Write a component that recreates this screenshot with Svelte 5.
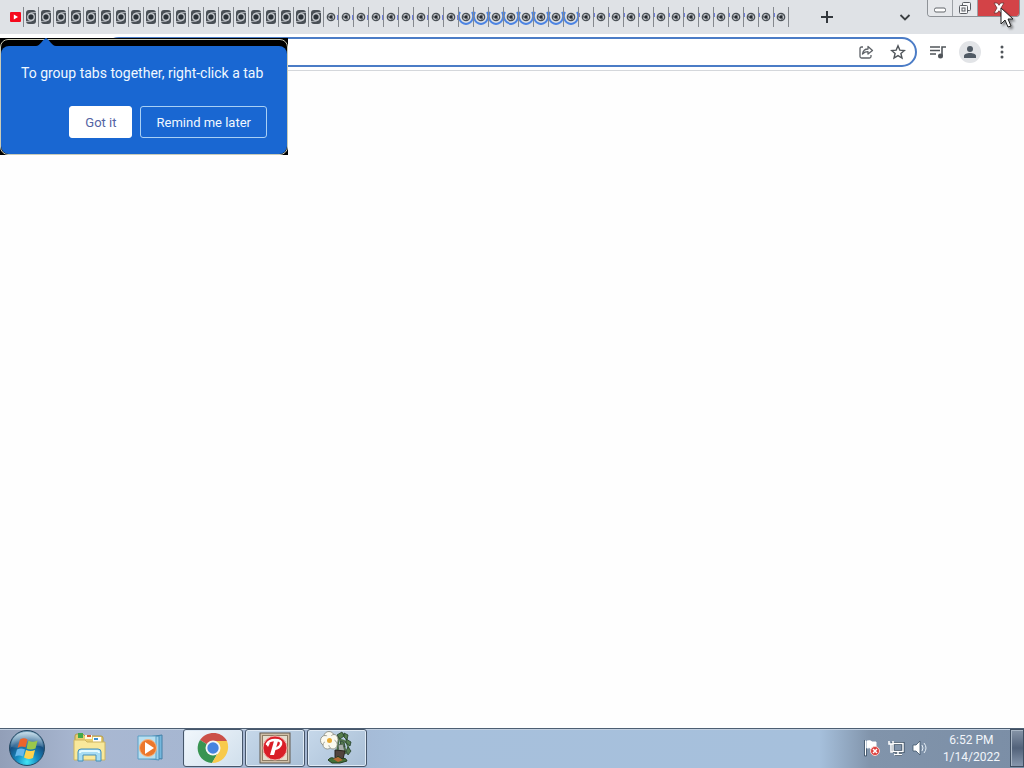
<script lang="ts">
  type Tab = { id: number; large: boolean; loading: boolean; hint: boolean };

  const tabs: Tab[] = Array.from({ length: 51 }, (_, i) => ({
    id: i,
    large: i < 20,
    loading: i >= 29 && i <= 36,
    hint: i >= 20,
  }));

  let address = $state("");
  let showPromo = $state(true);
</script>

<div class="screen">
  <header class="tabstrip">
    <div class="tabs">
      <button class="tab first" aria-label="YouTube">
        <svg width="11" height="10" viewBox="0 0 11 10">
          <rect width="11" height="10" rx="1" fill="#f5091c" />
          <path d="M3.8 2.5 8 5 3.8 7.5z" fill="#fff" />
        </svg>
      </button>
      {#each tabs as tab (tab.id)}
        <button class="tab" aria-label="New tab">
          {#if tab.large}
            <svg width="12" height="16" viewBox="0 0 12 16">
              <rect x="1" y="1" width="10" height="14" rx="3" fill="#4a5056" />
              <circle cx="6" cy="8" r="3.300" fill="none" stroke="#c9ccd0" stroke-width="1.200" />
              <path d="M3 5.500Q5 3 11 3.500M9 10.500Q7 13 1 12.500" fill="none" stroke="#c9ccd0" stroke-width=".8" />
              <circle cx="6" cy="8" r="2.200" fill="#2b3137" />
            </svg>
          {:else}
            <svg width="14" height="18" viewBox="0 0 14 18">
              {#if tab.loading}
                <path d="M1 4C-1.500 8 0 15 7 16 14 15 15.500 8 13 4" fill="none" stroke="#4c84e2" stroke-width="2" />
              {:else if tab.hint}
                <path d={tab.id < 29 ? "M13.500 7v5" : "M.5 5v4"} stroke="#6d7fe0" stroke-width="1" />
              {/if}
              <circle cx="7" cy="9" r="3.700" fill="#c9ccd0" stroke="#4a5056" stroke-width="1.300" />
              <path d="M7 7h3.500M5.300 10 3.600 7M8.700 10 7 13" stroke="#4a5056" stroke-width=".8" />
              <circle cx="7" cy="9" r="1.700" fill="#24292e" />
            </svg>
          {/if}
        </button>
      {/each}
    </div>
    <button class="new-tab" aria-label="Open new tab">
      <svg width="14" height="14" viewBox="0 0 14 14"><path d="M7 1v12M1 7h12" stroke="#33383d" stroke-width="2" /></svg>
    </button>
    <button class="tab-search" aria-label="Search tabs">
      <svg width="12" height="12" viewBox="0 0 12 12"><path d="m1.500 4 4.500 4.500L10.500 4" fill="none" stroke="#3c4043" stroke-width="1.800" /></svg>
    </button>
    <div class="window-buttons">
      <button aria-label="Minimize">
        <svg width="12" height="6" viewBox="0 0 12 6"><rect x=".5" y="1" width="11" height="4" rx="1.500" fill="#fff" stroke="#62666b" /></svg>
      </button>
      <button aria-label="Restore">
        <svg width="14" height="14" viewBox="0 0 14 14" stroke="#595d62" fill="#f8f9fa">
          <rect x="4.500" y="1.500" width="8" height="8" rx="1" />
          <rect x="1.500" y="4.500" width="8" height="8" rx="1" />
          <rect x="4" y="7" width="3" height="3" />
        </svg>
      </button>
      <button class="close" aria-label="Close">
        <svg width="12" height="12" viewBox="0 0 12 12">
          <path d="M1 1h3.300L6 3.300 7.700 1H11L8 6l3 5H7.700L6 8.700 4.300 11H1l3-5z" fill="#fff" stroke="#6c3434" stroke-width=".8" />
        </svg>
      </button>
    </div>
  </header>

  <div class="toolbar">
    <div class="omnibox">
      <input type="text" aria-label="Address and search bar" bind:value={address} />
      <button aria-label="Share this page">
        <svg width="16" height="16" viewBox="0 0 16 16" fill="none" stroke="#5f6368" stroke-width="1.300" stroke-linejoin="round">
          <path d="M5 3H3.500Q2 3 2 4.500v8Q2 14 3.500 14h8q1.500 0 1.500-1.500V11" />
          <path d="M4.500 10C5 6.500 7 5 10 5V2.500L14.500 6.500 10 10V7.700C7.500 7.700 6 8.500 4.500 10z" />
        </svg>
      </button>
      <button aria-label="Bookmark this tab">
        <svg width="16" height="16" viewBox="0 0 16 16"><path d="m8 1.800 1.800 4.300 4.600.4-3.500 3 1.100 4.500L8 11.600 4 14l1.100-4.500-3.500-3 4.600-.4z" fill="none" stroke="#50555a" stroke-width="1.400" /></svg>
      </button>
    </div>
    <button class="tool" aria-label="Media controls">
      <svg width="18" height="16" viewBox="0 0 18 16" fill="none" stroke="#50555a" stroke-width="1.600">
        <path d="M1 3h10M1 6.500h10M1 10h6M13 12V3h4" />
        <circle cx="11.500" cy="12" r="1.700" fill="#50555a" />
      </svg>
    </button>
    <button class="tool avatar" aria-label="Profile">
      <svg width="14" height="14" viewBox="0 0 14 14" fill="#505a64"><circle cx="7" cy="4" r="3" /><path d="M1 13v-2c0-2 3-3 6-3s6 1 6 3v2z" /></svg>
    </button>
    <button class="tool menu" aria-label="Menu">
      <svg width="6" height="16" viewBox="0 0 6 16" fill="#50555a"><circle cx="3" cy="3" r="1.500" /><circle cx="3" cy="8" r="1.500" /><circle cx="3" cy="13" r="1.500" /></svg>
    </button>
  </div>

  <main></main>

  {#if showPromo}
    <div class="promo-frame">
      <svg class="promo-arrow" width="20" height="8" viewBox="0 0 20 8"><path d="M0 8C4 8 7 1 10 0c3 1 6 8 10 8z" fill="#1967d2" /></svg>
      <section class="promo">
        <p>To group tabs together, right-click a tab</p>
        <div class="promo-actions">
          <button class="primary" onclick={() => (showPromo = false)}>Got it</button>
          <button onclick={() => (showPromo = false)}>Remind me later</button>
        </div>
      </section>
    </div>
  {/if}

  <footer class="taskbar">
    <button class="start" aria-label="Start">
      <svg width="38" height="38" viewBox="0 0 38 38">
        <defs>
          <radialGradient id="orb" cx=".5" cy=".9" r=".85">
            <stop offset="0" stop-color="#43e6f5" />
            <stop offset=".35" stop-color="#168cc2" />
            <stop offset=".7" stop-color="#164f82" />
            <stop offset="1" stop-color="#78a2bd" />
          </radialGradient>
          <linearGradient id="shine" x2="0" y2="1">
            <stop offset="0" stop-color="#e0f0f8" stop-opacity=".75" />
            <stop offset="1" stop-color="#b0d0df" stop-opacity=".15" />
          </linearGradient>
        </defs>
        <circle cx="19" cy="19" r="17.500" fill="url(#orb)" stroke="#244862" />
        <path d="M3 18C3 9 9 3 19 3s16 6 16 15c-9-4-23 3-32 0z" fill="url(#shine)" />
        <path d="M12 10.500q4-2.500 7.500 0l-2 8q-4-2-8 .5z" fill="#ed642b" />
        <path d="M20.500 11.500q4 2.500 9 0l-2 8q-5 2-9 0z" fill="#9ac74b" />
        <path d="M9 20.500q4-2 8 0l-2 7q-4-2-8 0z" fill="#67b8ec" />
        <path d="M18 21q4.500 2 9 0l-2 8q-5 2-9-.5z" fill="#ffd34c" />
      </svg>
    </button>
    <button class="pin" aria-label="Windows Explorer">
      <svg width="34" height="32" viewBox="0 0 34 32">
        <path d="M2 4Q2 2 4 2h6l2 2h16q2 0 2 2v19H2z" fill="#e8cf73" stroke="#b39a4a" />
        <path d="M5 1h5v5H5z" fill="#43a84b" /><path d="M12 3h7v4h-7z" fill="#fff9df" /><path d="M14 3h4v2h-4z" fill="#d65935" />
        <path d="M20 5h8v5h-8z" fill="#fff" /><path d="M21 6h4v2h-4z" fill="#398fce" />
        <path d="M1 8h11l2 2h18v18H1z" fill="#f8e89b" stroke="#cdb460" />
        <path d="M5 29V20q0-3 3-3h17q3 0 3 3v9h-5v-6H10v6z" fill="#a6dcf4" stroke="#458fb8" />
        <path d="M7 21q0-2 2-2h15q2 0 2 2" fill="none" stroke="#e4faff" stroke-width="2" />
      </svg>
    </button>
    <button class="pin" aria-label="Windows Media Player">
      <svg width="30" height="28" viewBox="0 0 30 28">
        <path d="m12 3 14-2v24l-14-2z" fill="#75b7dd" stroke="#4480a7" />
        <path d="m8 3 15-1v24l-15-2z" fill="#a1d3ec" stroke="#4b8fb9" />
        <path d="M2 2h18v23H2z" fill="#b8dff0" stroke="#5b9fc5" />
        <circle cx="12" cy="14" r="8.500" fill="#ec772c" stroke="#f5b582" />
        <path d="m9 8 9 6-9 6z" fill="#fff" />
      </svg>
    </button>
    <div class="running">
      <button aria-label="Google Chrome">
        <svg width="32" height="32" viewBox="0 0 32 32">
          <path d="M16 16 3 8C9-1 24-2 30 9z" fill="#cb5048" />
          <path d="M16 16 3 8C-3 18 3 30 15 31l7-12z" fill="#389451" />
          <path d="M16 9h14c4 10-3 22-15 22l7-12z" fill="#f8ca4c" />
          <circle cx="16" cy="16" r="7.500" fill="#f7f7f5" /><circle cx="16" cy="16" r="5.700" fill="#4684df" />
        </svg>
      </button>
      <button aria-label="Pinball">
        <svg width="32" height="32" viewBox="0 0 32 32">
          <rect x="1" y="1" width="30" height="30" fill="#d0c0a8" stroke="#60584e" />
          <rect x="3.500" y="3.500" width="25" height="25" fill="#e5ddcd" stroke="#8e7d65" />
          <circle cx="16" cy="16" r="12" fill="#d91e27" stroke="#f2aaa5" />
          <path d="M8 12q2-4 8-4 7 0 6 4t-7 5" fill="none" stroke="#fff" stroke-width="2.500" stroke-linecap="round" />
          <path d="M15 9h4l-4 14h-4zM7 12l4-1-2 4z" fill="#fff" />
        </svg>
      </button>
      <button aria-label="Plant">
        <svg width="34" height="34" viewBox="0 0 34 34">
          <path d="M15 11c3-8 8-9 11-6M19 6l-2 15M18 9c8-1 10 4 11 11M20 12c5 1 5 6 6 11" fill="none" stroke="#4e7145" stroke-width="1.800" />
          <path d="m17 4 5-3 2 4-4 3zM24 2l4 2-1 5-3-3zM26 8l5 3-1 4-4-3zM28 16l3 4-3 4-2-4zM20 10l4 1 1 5-4-2z" fill="#557d4d" stroke="#243f29" stroke-width=".8" />
          <path d="m18 14 5-1 2 8h-6z" fill="#a7afaa" stroke="#4f6554" />
          <path d="m15 19 10 1-2 8h-8z" fill="#51443d" stroke="#29251f" />
          <path d="M8 29q3-4 7-1l3-3 4 3q4-2 5 2l-7 2H12z" fill="#417038" stroke="#273d20" />
          <path d="m13 28 5-2 5 3-5 2z" fill="#b56934" />
          <g fill="#faf9ef" stroke="#86887c" stroke-width=".8">
            <ellipse cx="9" cy="5" rx="5" ry="4.500" /><ellipse cx="5" cy="9.500" rx="4.500" ry="5" /><ellipse cx="14" cy="8.500" rx="4" ry="5" /><ellipse cx="7.500" cy="14" rx="4.500" ry="4" /><ellipse cx="13" cy="13.500" rx="4.200" ry="4.500" />
          </g>
          <circle cx="9.500" cy="9.500" r="5" fill="#faf9ef" />
          <circle cx="9.500" cy="9.500" r="2.500" fill="#e6aa35" />
        </svg>
      </button>
    </div>
    <div class="tray">
      <button aria-label="Action Center">
        <svg width="18" height="18" viewBox="0 0 18 18">
          <path d="M2.500 1.500v15M4 2q4-1 5 1h4v7H8Q7 8 4 9z" fill="#fff" stroke="#fff" />
          <path d="M1.500 1v16h2V9.500" fill="none" stroke="#33475b" stroke-width=".7" />
          <circle cx="12" cy="12" r="4.500" fill="#dd3f3d" stroke="#f9d3ce" /><path d="m10 10 4 4m0-4-4 4" stroke="#fff" stroke-width="1.500" />
        </svg>
      </button>
      <button aria-label="Network">
        <svg width="18" height="18" viewBox="0 0 18 18" fill="none">
          <path d="M6 4.500h10v8H6zM8 15.500h7M11 13v2" stroke="#33475b" stroke-width="3" />
          <path d="M6 4.500h10v8H6zM7 15.500h8M11 13v2M2 2v3h4V2M4 5v8h2" stroke="#fff" stroke-width="1.500" />
        </svg>
      </button>
      <button aria-label="Volume">
        <svg width="18" height="18" viewBox="0 0 18 18">
          <path d="M2 6h3l4-4v14l-4-4H2z" fill="#fff" stroke="#40556a" stroke-width=".8" />
          <path d="M11 6q2 3 0 6M13 4q4 5 0 10" fill="none" stroke="#e6eff6" />
        </svg>
      </button>
      <button class="clock"><span>6:52 PM</span><span>1/14/2022</span></button>
      <button class="show-desktop" aria-label="Show desktop"></button>
    </div>
  </footer>

  <svg class="cursor" width="14" height="22" viewBox="0 0 14 22">
    <path d="M1 1v16l4-4 3 7 3-1-3-7h5z" fill="#fff" stroke="#222" />
  </svg>
</div>

<style>
  :global(body) { margin: 0; background: #fff; }
  .screen {
    position: relative;
    display: flex;
    flex-direction: column;
    min-height: 100vh;
    overflow: hidden;
    background: #fefefe;
    font-family: Roboto, "Noto Sans", sans-serif;
    font-size: 12px;
  }
  button { padding: 0; border: 0; background: none; font: inherit; color: inherit; }
  svg { display: block; flex: none; }

  .tabstrip { display: flex; height: 34px; background: #dfe2e6; }
  .tabs { display: flex; align-items: center; }
  .tab {
    box-sizing: border-box;
    display: flex;
    align-items: center;
    justify-content: center;
    width: 15px;
    height: 20px;
    border-right: 1px solid #85898e;
    overflow: hidden;
  }
  .tab.first { width: 24px; padding-left: 7px; }
  .new-tab { margin-left: 31px; }
  .tab-search { margin-left: auto; margin-right: 16px; }
  .window-buttons {
    display: flex;
    height: 16px;
    margin-right: 4px;
    border: 1px solid #8e9297;
    border-top: 0;
    border-radius: 0 0 4px 4px;
    overflow: hidden;
  }
  .window-buttons button {
    display: flex;
    align-items: center;
    justify-content: center;
    width: 25px;
    border-right: 1px solid #9da1a6;
    background: #e6e8eb;
  }
  .window-buttons button:first-child { padding-top: 4px; }
  .window-buttons .close { width: 41px; border: 0; background: #d34347; }

  .toolbar {
    display: flex;
    align-items: center;
    height: 36px;
    padding-left: 104px;
    border-bottom: 1px solid #d4d7db;
    background: #fff;
  }
  .omnibox {
    box-sizing: border-box;
    display: flex;
    flex: 1;
    align-items: center;
    gap: 16px;
    height: 30px;
    padding: 0 9px 0 14px;
    border: 2px solid #4b7cc6;
    border-radius: 15px;
  }
  .omnibox input { flex: 1; min-width: 0; border: 0; outline: 0; background: none; font: inherit; }
  .tool { display: flex; align-items: center; justify-content: center; width: 22px; height: 22px; margin-left: 10px; }
  .avatar { border-radius: 50%; background: #e2e4e7; }
  .menu { margin-right: 11px; }
  main { flex: 1; }

  .promo-frame {
    position: absolute;
    top: 38px;
    left: 0;
    box-sizing: border-box;
    min-width: 288px;
    padding: 8px 1px 1px;
    background: #000;
  }
  .promo-frame::before {
    content: "";
    position: absolute;
    inset: 1px 0 0;
    border: 1px solid #c9cbb8;
    border-radius: 8px;
  }
  .promo-arrow { position: absolute; top: 0; left: 36px; }
  .promo {
    position: relative;
    padding: 18px 20px 16px;
    border-radius: 8px;
    background: #1967d2;
    color: #f0f8ff;
  }
  .promo p { margin: 0 0 24px; font-size: 14px; line-height: 18px; white-space: nowrap; }
  .promo-actions { display: flex; justify-content: flex-end; gap: 8px; }
  .promo-actions button {
    box-sizing: border-box;
    height: 32px;
    padding: 0 15px;
    font-size: 13px;
    border: 1px solid #a9d0f5;
    border-radius: 3px;
  }
  .promo-actions .primary { border-color: #fff; background: #fff; color: #5363a4; }

  .taskbar {
    display: flex;
    align-items: center;
    height: 38px;
    border-top: 1px solid #4d5e72;
    box-shadow: inset 0 1px #c2d0e1;
    background: linear-gradient(90deg, #929fb8 0, #a9b8d2 8%, #a3b5d1 30%, #a7c0dc 40%, #a6c0dc 80%, #8194ab 85%, #7b8ea6 100%);
    padding-bottom: 1px;
  }
  .start { margin: 0 27px 0 8px; }
  .pin { display: flex; justify-content: center; width: 34px; margin-right: 27px; }
  .running { display: flex; align-self: stretch; gap: 2px; margin-left: -12px; }
  .running button {
    box-sizing: border-box;
    display: flex;
    align-items: center;
    justify-content: center;
    width: 60px;
    border: 1px solid #46566a;
    border-radius: 3px;
    box-shadow: inset 0 0 0 1px #dfeaf5;
    background: linear-gradient(135deg, #c6d8ea, #a9bfd6);
  }
  .running button:first-child { background: linear-gradient(135deg, #f1f7fc, #d0dfec); }
  .tray { display: flex; align-items: center; align-self: stretch; gap: 6px; margin-left: auto; color: #f1f5fa; }
  .clock {
    display: flex;
    flex-direction: column;
    align-items: center;
    margin: 1px 4px 0 8px;
    line-height: 17px;
  }
  .show-desktop {
    align-self: stretch;
    width: 14px;
    border: 1px solid #3f4e61;
    box-shadow: inset 1px 1px #a9b6c5;
    background: linear-gradient(#8795a8, #52627a 50%, #8696ac);
  }

  .cursor { position: absolute; top: 7px; right: 10px; filter: drop-shadow(2px 2px 1px #0006); }
</style>
